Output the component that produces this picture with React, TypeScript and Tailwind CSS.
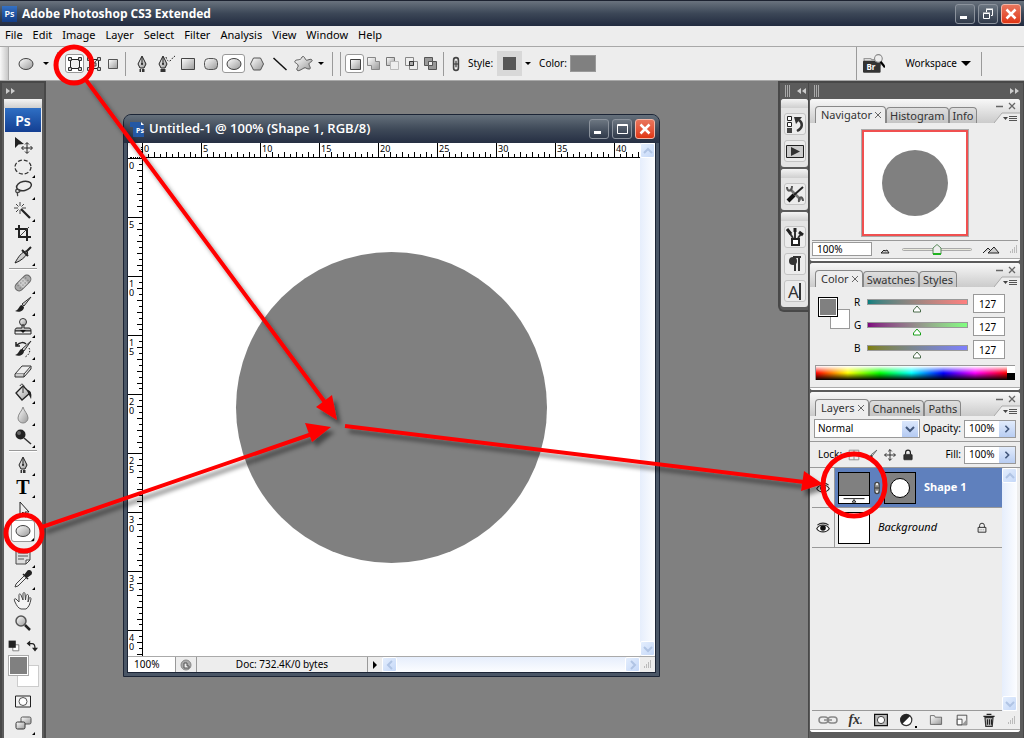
import type { ReactNode } from 'react';
import clsx from 'clsx';

const menus = ['File', 'Edit', 'Image', 'Layer', 'Select', 'Filter', 'Analysis', 'View', 'Window', 'Help'];

const toolGroups = [
  ['move', 'marquee', 'lasso', 'wand', 'crop', 'slice'],
  ['heal', 'brush', 'stamp', 'history', 'eraser', 'bucket', 'blur', 'dodge'],
  ['pen', 'type', 'select', 'ellipse'],
  ['notes', 'eyedropper', 'hand', 'zoom'],
];

const noFlyout = ['move', 'crop', 'hand', 'zoom'];

const drawModes = ['shapeLayer', 'paths', 'fillPixels'];
const shapes = ['pen', 'freePen', 'rect', 'roundRect', 'ellipse', 'polygon', 'line', 'custom'];
const pathModes = ['newShape', 'add', 'subtract', 'intersect', 'exclude'];

const dockGroups = [['layerHistory', 'actions'], ['presets'], ['brushes', 'paragraph', 'character']];

const channels = [
  { label: 'R', value: 127, track: 'bg-linear-to-r from-[#007f7f] to-[#ff7f7f]' },
  { label: 'G', value: 127, track: 'bg-linear-to-r from-[#7f007f] to-[#7fff7f]' },
  { label: 'B', value: 127, track: 'bg-linear-to-r from-[#7f7f00] to-[#7f7fff]' },
];

const rulerMarks = [0, 5, 10, 15, 20, 25, 30, 35, 40];

const M = 'url(#metal)';

const icons: Record<string, ReactNode> = {
  move: (
    <>
      <path d="M2 2v11l3.500-3.500L11 9z" fill="#222" />
      <path d="M14 8v10M9 13h10" stroke="#222" />
      <path d="M12 9.500l2-2 2 2M12 16.500l2 2 2-2M10.500 11l-2 2 2 2M17.500 11l2 2-2 2" fill="none" stroke="#222" />
    </>
  ),
  marquee: <ellipse cx="10" cy="10" rx="8" ry="7" fill="none" stroke="#333" strokeWidth="1.300" strokeDasharray="4 2" />,
  lasso: (
    <>
      <ellipse cx="11" cy="7" rx="7.500" ry="4.500" fill="none" stroke="#333" strokeWidth="1.500" transform="rotate(-12 11 7)" />
      <path d="M5 10c-3 0-3 4 0 3.500s2-3.500 0-3M4 13c1 2 0 3 1 4" fill="none" stroke="#444" strokeWidth="1.300" />
    </>
  ),
  wand: (
    <>
      <path d="M8 8l9 9" stroke="#222" strokeWidth="2.200" />
      <path d="M7 1v4M7 9v4M1 7h4M9 7h4M3 3l2.500 2.500M11 3L8.500 5.500M3 11l2.500-2.500" stroke="#444" />
    </>
  ),
  crop: (
    <>
      <path d="M6 2v12h12M2 6h12v12" fill="none" stroke="#222" strokeWidth="2" />
      <path d="M7 13l9-9" stroke="#444" />
    </>
  ),
  slice: (
    <>
      <path d="M2 18c3-6 7-11 11-12l2 2c-3 4-7 8-13 10z" fill={M} stroke="#222" />
      <path d="M9 5l6 6M13 7l5-5" stroke="#222" strokeWidth="2" />
    </>
  ),
  heal: (
    <g transform="rotate(-45 10 10)">
      <rect x="0.500" y="6" width="19" height="8" rx="4" fill="#aaa" stroke="#666" />
      <rect x="6.500" y="6.500" width="7" height="7" fill="#ccc" />
      <path d="M4 8.500h1M4 11.500h1M8 8.500h1M11 8.500h1M8 11.500h1M11 11.500h1M15 8.500h1M15 11.500h1" stroke="#666" />
    </g>
  ),
  brush: (
    <>
      <path d="M18 2l-9 7 2 2z" fill={M} stroke="#333" />
      <path d="M9 10c-3 0-3 5-7 6 4 2 9 0 9-4z" fill="#222" />
    </>
  ),
  stamp: (
    <>
      <circle cx="10" cy="5" r="3.500" fill={M} stroke="#333" />
      <path d="M9 8h2v3h5c2 0 2 2 2 3H2c0-1 0-3 2-3h5z" fill="#bbb" stroke="#222" />
      <path d="M2 14h16v3H2z" fill="#eee" stroke="#222" />
      <path d="M7 13h6l-3 3z" fill="#111" />
    </>
  ),
  history: (
    <>
      <path d="M18 2l-9 8 2 2z" fill={M} stroke="#333" />
      <path d="M9 10c-3 0-3 5-7 6 4 2 9 0 9-4z" fill="#222" />
      <path d="M4 6c3-3 7-3 9-1M3 3v4h4" fill="none" stroke="#222" strokeWidth="1.500" />
      <path d="M16 9c2 3 0 7-4 9" fill="none" stroke="#222" strokeDasharray="1.500 1.500" />
    </>
  ),
  eraser: (
    <>
      <path d="M2 13l7-8h9l-7 8z" fill="#eee" stroke="#333" />
      <path d="M2 13v3h9v-3M11 16l7-8V5" fill="#ccc" stroke="#333" />
    </>
  ),
  bucket: (
    <>
      <path d="M3 10l7-7 7 7-8 7z" fill={M} stroke="#222" strokeWidth="1.300" />
      <path d="M10 3v7M7 3c1-3 4-2 4 1" fill="none" stroke="#333" />
      <path d="M14 7c4 0 5 4 4 9l-3-6z" fill="#222" />
    </>
  ),
  blur: <path d="M10 2c1 4 5 7 5 11a5 5 0 0 1-10 0c0-4 4-7 5-11z" fill={M} stroke="#888" />,
  dodge: (
    <>
      <circle cx="7.500" cy="7.500" r="5" fill="#222" />
      <circle cx="6" cy="6" r="2" fill="#666" />
      <path d="M11 11l7 6" stroke="#333" strokeWidth="1.500" />
    </>
  ),
  pen: (
    <>
      <path d="M10 2l4 8-2 4H8l-2-4z" fill={M} stroke="#222" />
      <path d="M10 3v7" stroke="#222" />
      <circle cx="10" cy="10" r="1" fill="#222" />
      <path d="M7.500 15h5v3h-5z" fill="#333" />
      <path d="M9.500 15v3" stroke="#ddd" />
    </>
  ),
  freePen: (
    <>
      <path d="M8 2l4 8-2 4H6l-2-4z" fill={M} stroke="#222" />
      <path d="M8 3v7" stroke="#222" />
      <circle cx="8" cy="10" r="1" fill="#222" />
      <path d="M5.500 15h5v3h-5z" fill="#333" />
      <path d="M11 3c1 5 4 5 6 2 1-2 2-2 3-3" fill="none" stroke="#222" strokeDasharray="1.500 1.500" />
    </>
  ),
  select: <path d="M7 3v13l3-3 2 5 2-1-2-4h4z" fill="#eee" stroke="#222" />,
  notes: (
    <>
      <path d="M3 3h14v10l-4 4H3z" fill="#ddd" stroke="#444" />
      <path d="M5 6h10M5 9h10M5 12h6" stroke="#555" />
      <path d="M13 17v-4h4z" fill="#fff" stroke="#444" />
    </>
  ),
  eyedropper: (
    <>
      <path d="M12 6l2 2-9 9-3 1 1-3z" fill="#eee" stroke="#444" />
      <path d="M10 5l5 5M12 6l3-4c2-1 4 1 3 3l-4 3z" fill="#222" stroke="#222" strokeWidth="1.500" />
    </>
  ),
  hand: (
    <path
      d="M6 11L3 8C1 7 1 9 2 11c2 4 3 6 6 7h5c3-2 4-5 5-10 0-2-2-2-2 0l-1 3 .500-6c0-2-2-2-2.500 0L12.500 9 12 3c0-2-2-2-2 0v6L8 4C7 2 5.500 3 6 5z"
      fill="#f4f4f4"
      stroke="#444"
    />
  ),
  zoom: (
    <>
      <circle cx="8" cy="8" r="5" fill={M} stroke="#555" strokeWidth="1.500" />
      <path d="M12 12l5 5" stroke="#222" strokeWidth="2.500" />
    </>
  ),
  ellipse: <ellipse cx="10" cy="10" rx="7" ry="5.500" fill={M} stroke="#444" />,
  shapeLayer: (
    <>
      <path d="M5.500 5.500h9v9h-9z" fill="#eee" stroke="#222" />
      <path d="M3.500 3.500h3v3h-3zM13.500 3.500h3v3h-3zM3.500 13.500h3v3h-3zM13.500 13.500h3v3h-3z" fill="#ccc" stroke="#333" />
    </>
  ),
  paths: (
    <>
      <path d="M5.500 5.500h9v9h-9zM7 13c2 0 4-6 6-7" fill="none" stroke="#222" />
      <path d="M3.500 3.500h3v3h-3zM13.500 3.500h3v3h-3zM3.500 13.500h3v3h-3zM13.500 13.500h3v3h-3zM9 9h3v3H9z" fill="#ccc" stroke="#444" />
    </>
  ),
  fillPixels: <path d="M5.500 5.500h9v9h-9z" fill={M} stroke="#555" />,
  rect: <path d="M3.500 4.500h13v11h-13z" fill={M} stroke="#444" />,
  roundRect: <rect x="3.500" y="4.500" width="13" height="11" rx="4" fill={M} stroke="#555" />,
  polygon: <path d="M3.500 10l3-6h7l3 6-3 6h-7z" fill={M} stroke="#555" />,
  line: <path d="M3.500 4l13 12" stroke="#111" strokeWidth="1.500" />,
  custom: <path d="M9 3c2-2 3 2 4 3s5-2 6 0-3 2-3 4 3 5 0 5-3-2-5-1-6 4-7 2 2-3 1-5-4-2-3-4 6 0 7-4z" fill={M} stroke="#555" />,
  newShape: <path d="M5.500 5.500h10v10h-10z" fill={M} stroke="#444" />,
  add: <path d="M3.500 3.500h8v4h4v8h-8v-4h-4z" fill={M} stroke="#888" />,
  subtract: (
    <>
      <path d="M3.500 3.500h8v4h-4v4h-4z" fill={M} stroke="#777" />
      <path d="M7.500 7.500h8v8h-8z" fill="#eee" stroke="#bbb" />
    </>
  ),
  intersect: (
    <>
      <path d="M3.500 3.500h8v8h-8zM7.500 7.500h8v8h-8z" fill="#eee" stroke="#888" />
      <path d="M7.500 7.500h4v4h-4z" fill="#aaa" stroke="#333" />
    </>
  ),
  exclude: (
    <>
      <path d="M3.500 3.500h8v8h-8zM7.500 7.500h8v8h-8z" fill="#999" stroke="#555" />
      <path d="M7.500 7.500h4v4h-4z" fill="#eee" stroke="#555" />
    </>
  ),
  chain: (
    <>
      <rect x="7" y="2" width="6" height="16" rx="3" fill="#eee" stroke="#444" strokeWidth="2" />
      <path d="M10 6v8M7 10h6" stroke="#333" strokeWidth="1.500" />
    </>
  ),
  bridge: (
    <>
      <path d="M1 5h6l1 1h8v5H1z" fill="#ddd" stroke="#999" />
      <rect x="0" y="7" width="16" height="11" rx="1" fill="#333" />
      <circle cx="14" cy="5" r="3.500" fill="#eee" stroke="#888" />
      <path d="M16 8l4 5" stroke="#000" strokeWidth="2" />
    </>
  ),
  layerHistory: (
    <>
      <path d="M2.500 2.500h4v4h-4zM2.500 8.500h4v4h-4z" fill="#fff" stroke="#222" />
      <path d="M2 14h5v5H2z" fill="#444" />
      <path d="M12 17c6-3 6-8 2-11" fill="none" stroke="#333" strokeWidth="2.500" />
      <path d="M9 3h8l-6 7z" fill="#333" />
    </>
  ),
  actions: (
    <>
      <path d="M1.500 4.500h17v12h-17z" fill="#ccc" stroke="#222" />
      <path d="M6 6v9l9-4.500z" fill="#333" />
    </>
  ),
  presets: (
    <>
      <path d="M5 5l11 11" stroke="#777" strokeWidth="2.500" />
      <path d="M2 3c0 5 5 5 5-1M18 17c0-5-5-5-4 1" fill="none" stroke="#555" strokeWidth="2" />
      <path d="M18 3l-9 8" stroke="#222" strokeWidth="2" />
      <path d="M9 11l-6 6" stroke="#111" strokeWidth="4" />
    </>
  ),
  brushes: (
    <>
      <path d="M7 12h7v6H7z" fill="#fff" stroke="#222" strokeWidth="2" />
      <path d="M8 11L4 5M10 11V3M13 11l3-4" stroke="#333" strokeWidth="2" />
      <path d="M2 2l4 5M10 1v4M14 5l4 3" stroke="#222" strokeWidth="3" />
    </>
  ),
  paragraph: (
    <>
      <path d="M10 3v14M14 3v14M8 3h8" stroke="#333" strokeWidth="2" />
      <circle cx="8" cy="7" r="4" fill="#333" />
    </>
  ),
  mask: (
    <>
      <path d="M2 3h16v14H2z" fill="#bbb" stroke="#111" strokeWidth="1.500" />
      <circle cx="10" cy="10" r="4.500" fill="#fff" stroke="#222" />
    </>
  ),
  quickMask: (
    <>
      <path d="M2.500 4h15v11h-15z" fill="#f4f4f4" stroke="#222" />
      <circle cx="10" cy="9.500" r="4" fill="#fff" stroke="#555" />
    </>
  ),
  screenMode: (
    <>
      <rect x="8" y="3" width="10" height="7" rx="1.500" fill={M} stroke="#555" />
      <rect x="3" y="8" width="9" height="7" rx="1.500" fill={M} stroke="#333" />
    </>
  ),
  swap: (
    <>
      <path d="M4 6h6c4 0 5 3 5 8" fill="none" stroke="#222" strokeWidth="2" />
      <path d="M7 1L1 6l6 5zM10 13h10l-5 6z" fill="#222" />
    </>
  ),
  defaults: (
    <>
      <path d="M8 8h10v10H8z" fill="#fff" stroke="#777" strokeWidth="1.500" />
      <path d="M1 1h12v12H1z" fill="#222" />
    </>
  ),
  adjust: (
    <>
      <circle cx="9" cy="10" r="7" fill="#fff" stroke="#333" strokeWidth="1.500" />
      <path d="M4 15A7 7 0 0 1 14 5z" fill="#222" />
    </>
  ),
  links: (
    <g fill="none" stroke="#888" strokeWidth="1.500">
      <rect x="1" y="7" width="9" height="6" rx="3" />
      <rect x="10" y="7" width="9" height="6" rx="3" />
      <path d="M6 10h8" />
    </g>
  ),
  folder: <path d="M3 4.500h5l1 2h8v9H3z" fill={M} stroke="#555" />,
  newLayer: (
    <>
      <path d="M4 4h12v12H4z" fill="#eee" stroke="#333" />
      <path d="M4 9h6v7H4z" fill="#fff" stroke="#333" />
      <path d="M10 16l6 0V9z" fill="#999" />
    </>
  ),
  trash: (
    <>
      <path d="M5 7h10l-1 11H6z" fill="#ccc" stroke="#333" strokeWidth="1.500" />
      <path d="M3 5.500h14M7 3h6M8 9v7M10.500 9v7M13 9v7" stroke="#222" strokeWidth="1.500" />
    </>
  ),
  lock: (
    <>
      <path d="M6 9V6a4 4 0 0 1 8 0v3" fill="none" stroke="#222" strokeWidth="1.500" />
      <path d="M3.500 9h13v8h-13z" fill="#eee" stroke="#222" strokeWidth="1.500" />
      <path d="M6 13h8" stroke="#555" strokeDasharray="1.500 1.500" />
    </>
  ),
  lockAll: (
    <>
      <path d="M6 9V6a4 4 0 0 1 8 0v3" fill="none" stroke="#222" strokeWidth="2" />
      <rect x="3" y="9" width="14" height="9" rx="1" fill="#333" stroke="#111" />
    </>
  ),
  lockMove: (
    <path d="M10 1v18M1 10h18M7 4l3-3 3 3M7 16l3 3 3-3M4 7l-3 3 3 3M16 7l3 3-3 3" fill="none" stroke="#222" strokeWidth="1.500" />
  ),
  lockPixels: <path d="M2 2h16v16H2zM2 10h16M10 2v16" fill="#eee" stroke="#888" strokeWidth="1.500" />,
  eye: (
    <>
      <path d="M1 11c4-7 14-7 18 0-4 6-14 6-18 0z" fill="#fff" stroke="#222" strokeWidth="1.500" />
      <circle cx="10" cy="10" r="4" fill="#111" />
      <path d="M2 6c4-4 12-4 16 0" fill="none" stroke="#333" strokeWidth="1.500" />
    </>
  ),
};

function Icon({ name, className = 'size-5' }: { name: string; className?: string }) {
  return (
    <svg viewBox="0 0 20 20" className={clsx('shrink-0', className)} aria-hidden="true">
      {icons[name]}
    </svg>
  );
}

function Caret({ className = 'w-1.5' }: { className?: string }) {
  return (
    <svg viewBox="0 0 6 3" className={clsx('shrink-0', className)} aria-hidden="true">
      <path d="M0 0h6L3 3z" fill="#000" />
    </svg>
  );
}

function Chevron({ dir, className = 'size-2.5' }: { dir: 'up' | 'down' | 'left' | 'right'; className?: string }) {
  const d = { up: 'M1 7l4-4 4 4', down: 'M1 3l4 4 4-4', left: 'M7 1L3 5l4 4', right: 'M3 1l4 4-4 4' }[dir];
  return (
    <svg viewBox="0 0 10 10" className={className} aria-hidden="true">
      <path d={d} fill="none" stroke="currentColor" strokeWidth="2" />
    </svg>
  );
}

function Collapse({ flip = false }: { flip?: boolean }) {
  return (
    <svg viewBox="0 0 10 6" className={clsx('h-1.5 w-2.5', flip && 'rotate-180')} aria-hidden="true">
      <path d="M0 0v6l4-3zM5 0v6l4-3z" fill="#ccc" />
    </svg>
  );
}

function Grip() {
  return (
    <span className="flex gap-px">
      <i className="h-3 w-px bg-[#aaa]" />
      <i className="h-3 w-px bg-[#aaa]" />
      <i className="h-3 w-px bg-[#aaa]" />
    </span>
  );
}

function WindowButtons({ restore = false }: { restore?: boolean }) {
  const base = 'flex size-5 items-center justify-center rounded-[3px] border border-[#8b929c] bg-linear-to-b from-[#6c7681] to-[#303a4a]';
  return (
    <div className="flex gap-[3px]">
      <button aria-label="Minimize" className={base}>
        <svg viewBox="0 0 16 16" className="size-4">
          <path d="M3 10h7v3H3z" fill="#fff" />
        </svg>
      </button>
      <button aria-label="Restore" className={base}>
        <svg viewBox="0 0 16 16" className="size-4" fill="none" stroke="#fff">
          {restore ? (
            <path d="M3.500 7.500h6v5h-6zM3 7h7M6.500 6V3.500h6v6H11M6 3h7" />
          ) : (
            <path d="M3.500 3.500h10v9h-10zM3 4.500h11" />
          )}
        </svg>
      </button>
      <button
        aria-label="Close"
        className="flex size-5 items-center justify-center rounded-[3px] border border-[#f3b5a5] bg-linear-to-b from-[#e8755c] to-[#e03410]"
      >
        <svg viewBox="0 0 16 16" className="size-4">
          <path d="M3.500 3.500l9 9M12.500 3.500l-9 9" stroke="#fff" strokeWidth="2.500" />
        </svg>
      </button>
    </div>
  );
}

function TitleBar() {
  return (
    <header className="flex h-[26px] items-center border-t border-[#1c2230] bg-linear-to-b from-[#6a737e] via-[#3c4757] to-[#222b3f] pr-[3px] pl-[2px]">
      <span className="flex h-4 w-[15px] items-center justify-center bg-linear-to-b from-[#3471c4] to-[#123c86] text-[9px] leading-none font-semibold text-white">
        Ps
      </span>
      <h1 className="ml-[5px] flex-1 font-['Open_Sans'] text-[12px] font-bold text-white">Adobe Photoshop CS3 Extended</h1>
      <WindowButtons restore />
    </header>
  );
}

function MenuBar() {
  return (
    <nav className="flex h-5 items-center gap-2.5 bg-[#ededed] px-[5px] pb-0.5">
      {menus.map((menu) => (
        <button key={menu} className="whitespace-nowrap">
          {menu}
        </button>
      ))}
    </nav>
  );
}

function Separator({ className }: { className?: string }) {
  return <i className={clsx('h-6 w-px shrink-0 bg-[#9a9a9a]', className)} />;
}

function OptionButtons({ names, active, width, className }: { names: string[]; active: string; width: string; className?: string }) {
  return (
    <div className={clsx('flex', className)}>
      {names.map((name) => (
        <button
          key={name}
          aria-label={name}
          className={clsx(
            'flex h-[19px] items-center justify-center',
            width,
            name === active && 'rounded-[3px] border border-[#999] bg-white',
          )}
        >
          <Icon name={name} />
        </button>
      ))}
    </div>
  );
}

function OptionsBar() {
  return (
    <div className="flex h-[35px] items-center border-y border-[#a8a8a8] bg-[#ededed] text-[10px]">
      <i className="h-full w-[9px] border-r border-[#aaa] bg-linear-to-r from-[#f8f8f8] to-[#c8c8c8]" />
      <button aria-label="Tool preset" className="flex w-[34px] justify-center">
        <Icon name="ellipse" />
      </button>
      <Caret />
      <Separator className="ml-2" />
      <OptionButtons names={drawModes} active="shapeLayer" width="w-[19px]" className="ml-[7px]" />
      <Separator className="ml-[3px]" />
      <OptionButtons names={shapes} active="ellipse" width="w-[23px]" className="ml-1" />
      <Caret className="ml-1 w-1.5" />
      <Separator className="ml-2" />
      <Separator className="ml-[7px]" />
      <OptionButtons names={pathModes} active="newShape" width="w-[19px]" className="ml-1" />
      <Separator className="ml-[3px]" />
      <Icon name="chain" className="ml-1 size-4" />
      <span className="ml-1">Style:</span>
      <button aria-label="Style" className="ml-1 flex size-[25px] items-center justify-center bg-[#d8d8d8]">
        <i className="size-[13px] bg-[#575757]" />
      </button>
      <Caret className="ml-[3px] w-1.5" />
      <span className="ml-2">Color:</span>
      <button aria-label="Color" className="ml-[3px] h-[17px] w-[26px] border border-[#999] bg-[#808080]" />
      <i className="flex-1" />
      <i className="h-full w-px bg-[#9a9a9a]" />
      <button aria-label="Bridge" className="relative ml-1.5 size-[22px]">
        <Icon name="bridge" className="size-[22px]" />
        <span className="absolute top-[10px] left-[3px] text-[8px] leading-none font-bold text-white">Br</span>
      </button>
      <button className="ml-5 flex items-center gap-1">
        Workspace
        <Caret className="w-2.5" />
      </button>
      <Separator className="mr-[42px] ml-[10px]" />
    </div>
  );
}

function ToolButton({ name, active = false }: { name: string; active?: boolean }) {
  return (
    <button
      aria-label={name}
      className={clsx(
        'relative flex h-[22px] w-6 shrink-0 items-center justify-center',
        active && 'rounded-[3px] border border-[#999] bg-white',
      )}
    >
      {name === 'type' ? (
        <span className="font-['Liberation_Serif'] text-[20px] leading-none font-bold">T</span>
      ) : (
        <Icon name={name} />
      )}
      {!noFlyout.includes(name) && (
        <svg viewBox="0 0 3 3" className="absolute right-0 bottom-0 size-[3px]">
          <path d="M3 0v3H0z" fill="#000" />
        </svg>
      )}
    </button>
  );
}

function PanelGrip() {
  return <i className="block h-[9px] shrink-0 rounded-t-[3px] bg-linear-to-b from-[#f4f4f4] to-[#cfcfcf]" />;
}

function Toolbox() {
  return (
    <aside className="flex w-[46px] shrink-0 flex-col border-2 border-b-0 border-[#484848] bg-[#5b5b5b] px-[2px]">
      <button aria-label="Expand toolbox" className="flex h-4 shrink-0 items-center pl-0.5">
        <Collapse />
      </button>
      <div className="flex flex-1 flex-col bg-[#ededed]">
        <PanelGrip />
        <div className="mx-px flex h-6 shrink-0 items-center justify-center bg-linear-to-b from-[#2f6fc4] to-[#143f92] text-[14px] font-semibold text-white">
          Ps
        </div>
        <div className="flex flex-col items-center pt-0.5">
          {toolGroups.map((group, i) => (
            <div key={i} className="flex flex-col items-center">
              {i > 0 && (
                <i className={clsx('w-7', i === 3 ? 'h-1' : 'my-0.5 h-0.5 border-t border-[#999] bg-white')} />
              )}
              {group.map((name) => (
                <ToolButton key={name} name={name} active={name === 'ellipse'} />
              ))}
            </div>
          ))}
          <div className="mt-1.5 flex gap-1.5">
            <button aria-label="Default colors">
              <Icon name="defaults" className="size-3" />
            </button>
            <button aria-label="Swap colors">
              <Icon name="swap" className="size-3" />
            </button>
          </div>
          <div className="relative mt-[3px] h-8 w-[31px]">
            <button aria-label="Background color" className="absolute right-0 bottom-0 size-[22px] border border-[#ccc] bg-white" />
            <button
              aria-label="Foreground color"
              className="absolute top-0 left-0 size-[21px] border border-[#aaa] bg-[#808080] shadow-[inset_0_0_0_1px_#fff]"
            />
          </div>
          <button aria-label="Quick mask" className="mt-1 flex h-[22px] items-center">
            <Icon name="quickMask" />
          </button>
          <ToolButton name="screenMode" />
        </div>
      </div>
    </aside>
  );
}

function Scroller({ horizontal = false, className }: { horizontal?: boolean; className?: string }) {
  const arrow =
    'flex size-[15px] shrink-0 items-center justify-center rounded-[2px] border border-white bg-linear-to-br from-[#e4eefd] to-[#c5d8f8] text-[#b0c4e4]';
  return (
    <div
      className={clsx(
        'flex justify-between',
        horizontal ? 'h-[15px] flex-1 bg-linear-to-b' : 'w-[15px] flex-col bg-linear-to-r',
        'from-[#e6eefc] to-[#fcfdff]',
        className,
      )}
    >
      <button aria-label="Scroll back" className={arrow}>
        <Chevron dir={horizontal ? 'left' : 'up'} />
      </button>
      <button aria-label="Scroll forward" className={arrow}>
        <Chevron dir={horizontal ? 'right' : 'down'} />
      </button>
    </div>
  );
}

function RulerTop() {
  return (
    <div className="flex h-[15px] min-w-0 flex-1 overflow-hidden border-b border-black bg-white">
      {rulerMarks.map((mark) => (
        <div key={mark} className="relative h-full w-[59px] shrink-0 border-l border-black">
          <span className="absolute top-px left-px text-[9px] leading-none">{mark}</span>
          <svg viewBox="0 0 58 5" className="absolute bottom-0 left-0 h-[5px] w-[58px]" shapeRendering="crispEdges">
            <path d="M5.500 2v3M17.500 2v3M29.500 2v3M41.500 2v3M52.500 2v3M11.500 0v5M23.500 0v5M35.500 0v5M47.500 0v5" stroke="#000" />
          </svg>
        </div>
      ))}
    </div>
  );
}

function RulerLeft() {
  return (
    <div className="flex w-[15px] shrink-0 flex-col overflow-hidden border-r border-black bg-white">
      {rulerMarks.map((mark) => (
        <div key={mark} className="relative h-[59px] w-full shrink-0 border-t border-black">
          <span className="absolute top-0.5 left-px flex flex-col text-[9px] leading-[9px]">
            {String(mark)
              .split('')
              .map((digit, i) => (
                <span key={i}>{digit}</span>
              ))}
          </span>
          <svg viewBox="0 0 5 58" className="absolute top-0 right-0 h-[58px] w-[5px]" shapeRendering="crispEdges">
            <path d="M2 5.500h3M2 17.500h3M2 29.500h3M2 41.500h3M2 52.500h3M0 11.500h5M0 23.500h5M0 35.500h5M0 47.500h5" stroke="#000" />
          </svg>
        </div>
      ))}
    </div>
  );
}

function ResizeCorner({ className }: { className?: string }) {
  return (
    <svg viewBox="0 0 9 9" className={clsx('size-[9px] shrink-0', className)} aria-hidden="true">
      <path d="M7 1h1M5 3h1M7 3h1M3 5h1M5 5h1M7 5h1M1 7h1M3 7h1M5 7h1M7 7h1" stroke="#888" />
    </svg>
  );
}

function DocumentWindow() {
  return (
    <section className="absolute top-[33px] left-[77px] flex h-[563px] w-[537px] flex-col overflow-hidden rounded-t-lg border border-[#1c2536] bg-[#4a5666]">
      <div className="flex h-7 shrink-0 items-center bg-linear-to-b from-[#65707b] via-[#3f4a59] to-[#262f43] pr-1 pl-1.5">
        <svg viewBox="0 0 16 16" className="size-4" aria-hidden="true">
          <path d="M0 1h10l4 3v12H3V6H0z" fill="#2458a4" />
          <path d="M11 1l3 3h-3z" fill="#fff" />
        </svg>
        <span className="-ml-3 w-3 pt-1 text-center text-[7px] font-bold text-white">Ps</span>
        <h2 className="ml-[3px] flex-1 font-['Open_Sans'] text-[13px] font-semibold text-white">
          Untitled-1 @ 100% (Shape 1, RGB/8)
        </h2>
        <WindowButtons />
      </div>
      <div className="mx-[3px] mb-[3px] flex min-h-0 flex-1 flex-col border border-t-0 border-[#1c2536] bg-white">
        <div className="flex min-h-0 flex-1">
          <div className="flex min-w-0 flex-1 flex-col">
            <div className="flex">
              <i className="mt-1 ml-0.5 h-[11px] w-3 border-r border-b border-dotted border-black" />
              <RulerTop />
            </div>
            <div className="flex min-h-0 flex-1">
              <RulerLeft />
              <div className="flex min-w-0 flex-1 items-center justify-center bg-white">
                <div className="size-[311px] rounded-full bg-[#808080]" />
              </div>
            </div>
          </div>
          <Scroller />
        </div>
        <div className="flex h-4 shrink-0 items-stretch border-t border-[#aaa] bg-[#ededed]">
          <input aria-label="Zoom" defaultValue="100%" className="w-[47px] bg-white px-1.5 text-[10px]" />
          <button aria-label="Version cue" className="flex w-[22px] items-center justify-center border-x border-[#999]">
            <svg viewBox="0 0 12 12" className="size-3">
              <circle cx="6" cy="6" r="5" fill="#aaa" stroke="#888" />
              <path d="M4 9V4h3v3h2v2z" fill="#eee" stroke="#555" />
            </svg>
          </button>
          <span className="w-[171px] border-r border-[#999] text-center text-[10px] leading-[15px]">Doc: 732.4K/0 bytes</span>
          <button aria-label="Status options" className="flex w-[14px] items-center justify-center">
            <Caret className="w-2 -rotate-90" />
          </button>
          <Scroller horizontal />
          <ResizeCorner className="m-[3px]" />
        </div>
      </div>
    </section>
  );
}

function IconDock() {
  return (
    <div className="self-start rounded-bl-md border-2 border-r-0 border-[#484848] bg-[#5b5b5b] pb-[3px]">
      <div className="flex h-4 items-center gap-1.5 pl-[5px]">
        <Grip />
        <Collapse flip />
      </div>
      <div className="flex flex-col gap-0.5 pl-px">
        {dockGroups.map((group) => (
          <div key={group[0]} className="w-[27px] rounded-[3px] bg-[#e4e4e4]">
            <PanelGrip />
            <div className="flex flex-col items-center gap-[5px] py-[5px]">
              {group.map((name) => (
                <button
                  key={name}
                  aria-label={name}
                  className="flex size-[22px] items-center justify-center rounded-[3px] border border-[#c4c4c4] bg-[#ececec]"
                >
                  {name === 'character' ? (
                    <span className="border-r-2 border-[#333] text-[17px] leading-[17px] text-[#333]">A</span>
                  ) : (
                    <Icon name={name} />
                  )}
                </button>
              ))}
            </div>
          </div>
        ))}
      </div>
    </div>
  );
}

function Panel({ tabs, className, children }: { tabs: string[]; className?: string; children: ReactNode }) {
  return (
    <section className={clsx('flex flex-col rounded-[3px] bg-[#ededed]', className)}>
      <div className="flex h-6 items-end rounded-t-[3px] bg-linear-to-b from-[#f8f8f8] to-[#cbcbcb] pl-[5px]">
        {tabs.map((tab, i) => (
          <button
            key={tab}
            className={clsx(
              'flex items-center gap-0.5 rounded-t-[4px] border border-b-0 border-[#888] px-[3px] text-[11px] leading-4 text-[#333]',
              i === 0 ? 'h-[17px] bg-[#ededed] pl-[5px]' : 'h-4 bg-linear-to-b from-[#dedede] to-[#c4c4c4]',
            )}
          >
            {tab}
            {i === 0 && (
              <svg viewBox="0 0 8 8" className="size-2" aria-hidden="true">
                <path d="M1 1l6 6M7 1L1 7" stroke="#666" />
              </svg>
            )}
          </button>
        ))}
        <div className="ml-auto flex h-full flex-col items-end justify-between pr-[3px]">
          <svg viewBox="0 0 22 8" className="mt-[3px] h-2 w-[22px]" aria-hidden="true">
            <path d="M1 4.500h7M14 1l6 6M20 1l-6 6" stroke="#666" strokeWidth="1.300" />
          </svg>
          <svg viewBox="0 0 26 11" className="-mr-[3px] h-[11px] w-[26px]" aria-hidden="true">
            <path d="M0 11L8 1h18v10z" fill="#ededed" />
            <path d="M0 11L8 1h18" fill="none" stroke="#aaa" />
            <path d="M9 5h5l-2.500 3z" fill="#444" />
            <path d="M15 4.500h8M15 6.500h8M15 8.500h8" stroke="#555" />
          </svg>
        </div>
      </div>
      {children}
      <i className="mt-auto h-[3px] rounded-b-[3px] border-t border-[#aaa] bg-white" />
    </section>
  );
}

function Navigator() {
  return (
    <Panel tabs={['Navigator', 'Histogram', 'Info']} className="h-[162px]">
      <div className="flex flex-1 flex-col px-0.5">
        <div className="mx-auto mt-[7px] flex size-[106px] items-center justify-center border-2 border-[#f05050] bg-white outline outline-[#aaa]">
          <div className="size-[66px] rounded-full bg-[#808080]" />
        </div>
        <div className="mt-1 flex h-[17px] items-center border-t border-[#999]">
          <input
            aria-label="Zoom level"
            defaultValue="100%"
            className="h-[14px] w-[60px] shrink-0 border border-[#999] bg-white px-1 text-[10px]"
          />
          <svg viewBox="0 0 10 6" className="mt-1 ml-2 h-1.5 w-2.5 shrink-0" aria-hidden="true">
            <path d="M1 5l3-3 1 1 2-1 2 3z" fill="#ccc" stroke="#222" />
          </svg>
          <div className="relative ml-3 flex h-3 w-[70px] shrink-0 items-center">
            <i className="h-[3px] w-full rounded-sm border border-[#aaa] bg-[#e8e8dc]" />
            <svg viewBox="0 0 10 11" className="pointer-events-none absolute left-[30px] h-[11px] w-2.5">
              <path d="M1 4l4-3.500L9 4v6H1z" fill="#eee" stroke="#5b8a5b" />
              <path d="M1 10h8" stroke="#21b321" strokeWidth="2" />
            </svg>
            <input aria-label="Zoom slider" type="range" className="absolute inset-0 w-full opacity-0" />
          </div>
          <svg viewBox="0 0 18 9" className="ml-2.5 h-[9px] w-[18px] shrink-0" aria-hidden="true">
            <path d="M1 8l5-5 2 2M6 8l6-6 5 6z" fill="#ccc" stroke="#222" />
          </svg>
          <ResizeCorner className="ml-auto" />
        </div>
      </div>
    </Panel>
  );
}

function ColorPanel() {
  return (
    <Panel tabs={['Color', 'Swatches', 'Styles']} className="h-[127px]">
      <div className="flex pt-[7px] pr-[15px] pl-2">
        <div className="relative mt-[3px] h-8 w-8">
          <button aria-label="Set background" className="absolute right-0 bottom-0 size-5 border border-[#999] bg-white" />
          <button
            aria-label="Set foreground"
            className="absolute top-0 left-0 size-5 border border-black bg-[#808080] shadow-[inset_0_0_0_1px_#fff]"
          />
        </div>
        <div className="ml-1 flex flex-1 flex-col gap-1">
          {channels.map(({ label, value, track }) => (
            <label key={label} className="flex h-[19px] items-center text-[10px]">
              <span className="w-[13px] pb-1 leading-[14px]">{label}</span>
              <span className="relative mt-1 h-[13px] flex-1">
                <i className={clsx('block h-1.5 border border-[#999]', track)} />
                <svg
                  viewBox="0 0 9 8"
                  className="pointer-events-none absolute top-[6px] h-2 w-[9px] -translate-x-1/2"
                  style={{ left: `${(value / 255) * 100}%` }}
                >
                  <path d="M4.500 1L8 5v2H1V5z" fill="#fff" stroke={label === 'G' ? '#18a018' : '#4b6b4b'} />
                </svg>
                <input aria-label={label} type="range" max={255} defaultValue={value} className="absolute inset-0 w-full opacity-0" />
              </span>
              <input
                aria-label={`${label} value`}
                defaultValue={value}
                className="ml-[5px] h-[19px] w-8 border border-[#999] bg-white px-[5px]"
              />
            </label>
          ))}
        </div>
      </div>
      <div className="mx-[5px] mt-1.5 flex h-[15px] border-t border-l border-[#999]">
        <div className="flex-1 bg-[linear-gradient(to_bottom,#fff_0%,transparent_50%,#000_100%),linear-gradient(to_right,red,yellow,lime,cyan,blue,magenta,red)]" />
        <div className="flex w-2 flex-col">
          <i className="flex-1 bg-white" />
          <i className="flex-1 bg-black" />
        </div>
      </div>
    </Panel>
  );
}

function PercentField({ label }: { label: string }) {
  return (
    <label className="ml-auto flex items-center gap-[3px]">
      {label}
      <span className="flex h-[18px] w-[52px] border border-[#999] bg-white">
        <input defaultValue="100%" className="w-[34px] px-1 text-[10px]" />
        <button
          aria-label={`${label} slider`}
          className="flex flex-1 items-center justify-center bg-linear-to-b from-[#e2ecfc] to-[#b8cdf2] text-[#43587c]"
        >
          <Chevron dir="right" className="size-2" />
        </button>
      </span>
    </label>
  );
}

function LayersPanel() {
  return (
    <Panel tabs={['Layers', 'Channels', 'Paths']} className="min-h-[339px] flex-1">
      <div className="flex h-[26px] items-center border-b border-[#999] pr-1 pl-1 text-[10px]">
        <span className="flex h-[19px] w-[106px] items-center border border-[#999] bg-white pr-px">
          <select aria-label="Blend mode" className="h-full flex-1 appearance-none px-[3px]">
            <option>Normal</option>
          </select>
          <i className="pointer-events-none flex size-4 items-center justify-center bg-linear-to-b from-[#dce8fc] to-[#b4caf2] text-[#43587c]">
            <Chevron dir="down" />
          </i>
        </span>
        <PercentField label="Opacity:" />
      </div>
      <div className="flex h-[26px] items-center gap-1.5 border-b border-[#999] pr-1 pl-2 text-[10px]">
        <span className="w-6">Lock:</span>
        <Icon name="lockPixels" className="size-3" />
        <Icon name="brush" className="size-3" />
        <Icon name="lockMove" className="size-3" />
        <Icon name="lockAll" className="size-3" />
        <PercentField label="Fill:" />
      </div>
      <div className="mr-[3px] ml-0.5 flex flex-1">
        <div className="flex-1 border-b border-[#999]">
          <div className="flex h-10 border-b border-[#999]">
            <button aria-label="Toggle Shape 1" className="flex w-[23px] items-center justify-center border-r border-[#999]">
              <Icon name="eye" className="size-3.5" />
            </button>
            <div className="flex flex-1 items-center bg-[#5f80bd] pl-[3px]">
              <div className="flex size-8 flex-col justify-end border border-black bg-[#808080]">
                <svg viewBox="0 0 30 8" className="h-2 w-full border-t border-black bg-white" aria-hidden="true">
                  <path d="M3 3h24" stroke="#000" />
                  <path d="M13 7l2-3 2 3z" fill="#fff" stroke="#000" />
                </svg>
              </div>
              <Icon name="chain" className="size-3.5" />
              <div className="flex size-8 items-center justify-center border border-black bg-[#808080]">
                <div className="size-5 rounded-full border border-black bg-white" />
              </div>
              <span className="ml-2 text-[11px] font-bold text-white">Shape 1</span>
            </div>
          </div>
          <div className="flex h-10 border-b border-[#999]">
            <button aria-label="Toggle Background" className="flex w-[23px] items-center justify-center border-r border-[#999]">
              <Icon name="eye" className="size-3.5" />
            </button>
            <div className="flex flex-1 items-center pr-3.5 pl-[3px]">
              <div className="size-8 border border-black bg-white" />
              <span className="ml-2 flex-1 text-[11px] italic">Background</span>
              <Icon name="lock" className="size-3" />
            </div>
          </div>
        </div>
        <Scroller className="w-[15px]" />
      </div>
      <div className="flex h-[18px] items-center justify-between pr-1 pl-2">
        <button aria-label="Link layers">
          <Icon name="links" />
        </button>
        <button className="font-['Liberation_Serif'] text-[14px] leading-none font-bold text-[#333] italic">
          fx<span className="text-[10px]">.</span>
        </button>
        <button aria-label="Add mask">
          <Icon name="mask" className="size-4" />
        </button>
        <button aria-label="Adjustment layer" className="flex items-end">
          <Icon name="adjust" className="size-4" />
          <i className="size-0.5 bg-black" />
        </button>
        <button aria-label="New group">
          <Icon name="folder" className="size-4" />
        </button>
        <button aria-label="New layer">
          <Icon name="newLayer" className="size-4" />
        </button>
        <button aria-label="Delete layer">
          <Icon name="trash" className="size-4" />
        </button>
        <ResizeCorner />
      </div>
    </Panel>
  );
}

function PanelDock() {
  return (
    <div className="flex w-[216px] shrink-0 flex-col border-t-2 border-r border-l border-[#484848] bg-[#5b5b5b] pr-[3px] pb-1.5 pl-px">
      <div className="flex h-4 items-center justify-between pl-1">
        <Grip />
        <Collapse />
      </div>
      <div className="flex flex-1 flex-col gap-0.5">
        <Navigator />
        <ColorPanel />
        <LayersPanel />
      </div>
    </div>
  );
}

// Red callouts that run from the highlighted controls to the canvas and the layer thumbnail
function Annotations() {
  return (
    <svg width="1024" height="738" className="pointer-events-none absolute top-0 left-0" aria-hidden="true">
      <defs>
        <filter id="drop" x="-10%" y="-10%" width="120%" height="130%">
          <feDropShadow dx="4" dy="5" stdDeviation="2" floodColor="#000" floodOpacity="0.450" />
        </filter>
      </defs>
      <g stroke="#f00" strokeWidth="4" fill="none" filter="url(#drop)">
        <path d="M86 80L327 405M42 527L312 434M345 426L804 482" />
        <path d="M337 420l-21-13 16-12zM331 427l-19 15-7-19zM823 484l-22 7 3-20z" fill="#f00" stroke="none" />
      </g>
      <g stroke="#f00" strokeWidth="5" fill="none">
        <circle cx="74" cy="65" r="18" />
        <circle cx="24" cy="533" r="18" />
        <circle cx="854" cy="485" r="31" />
      </g>
    </svg>
  );
}

export default function App() {
  return (
    <div className="relative flex min-h-screen flex-col overflow-hidden bg-[#808080] font-['Noto_Sans',sans-serif] text-[11px] text-black">
      <svg className="absolute size-0" aria-hidden="true">
        <defs>
          <linearGradient id="metal" x1="0" y1="0" x2="1" y2="1">
            <stop offset="0" stopColor="#fff" />
            <stop offset="1" stopColor="#999" />
          </linearGradient>
        </defs>
      </svg>
      <TitleBar />
      <MenuBar />
      <OptionsBar />
      <div className="flex flex-1">
        <Toolbox />
        <main className="relative flex-1">
          <DocumentWindow />
        </main>
        <IconDock />
        <PanelDock />
      </div>
      <Annotations />
    </div>
  );
}
